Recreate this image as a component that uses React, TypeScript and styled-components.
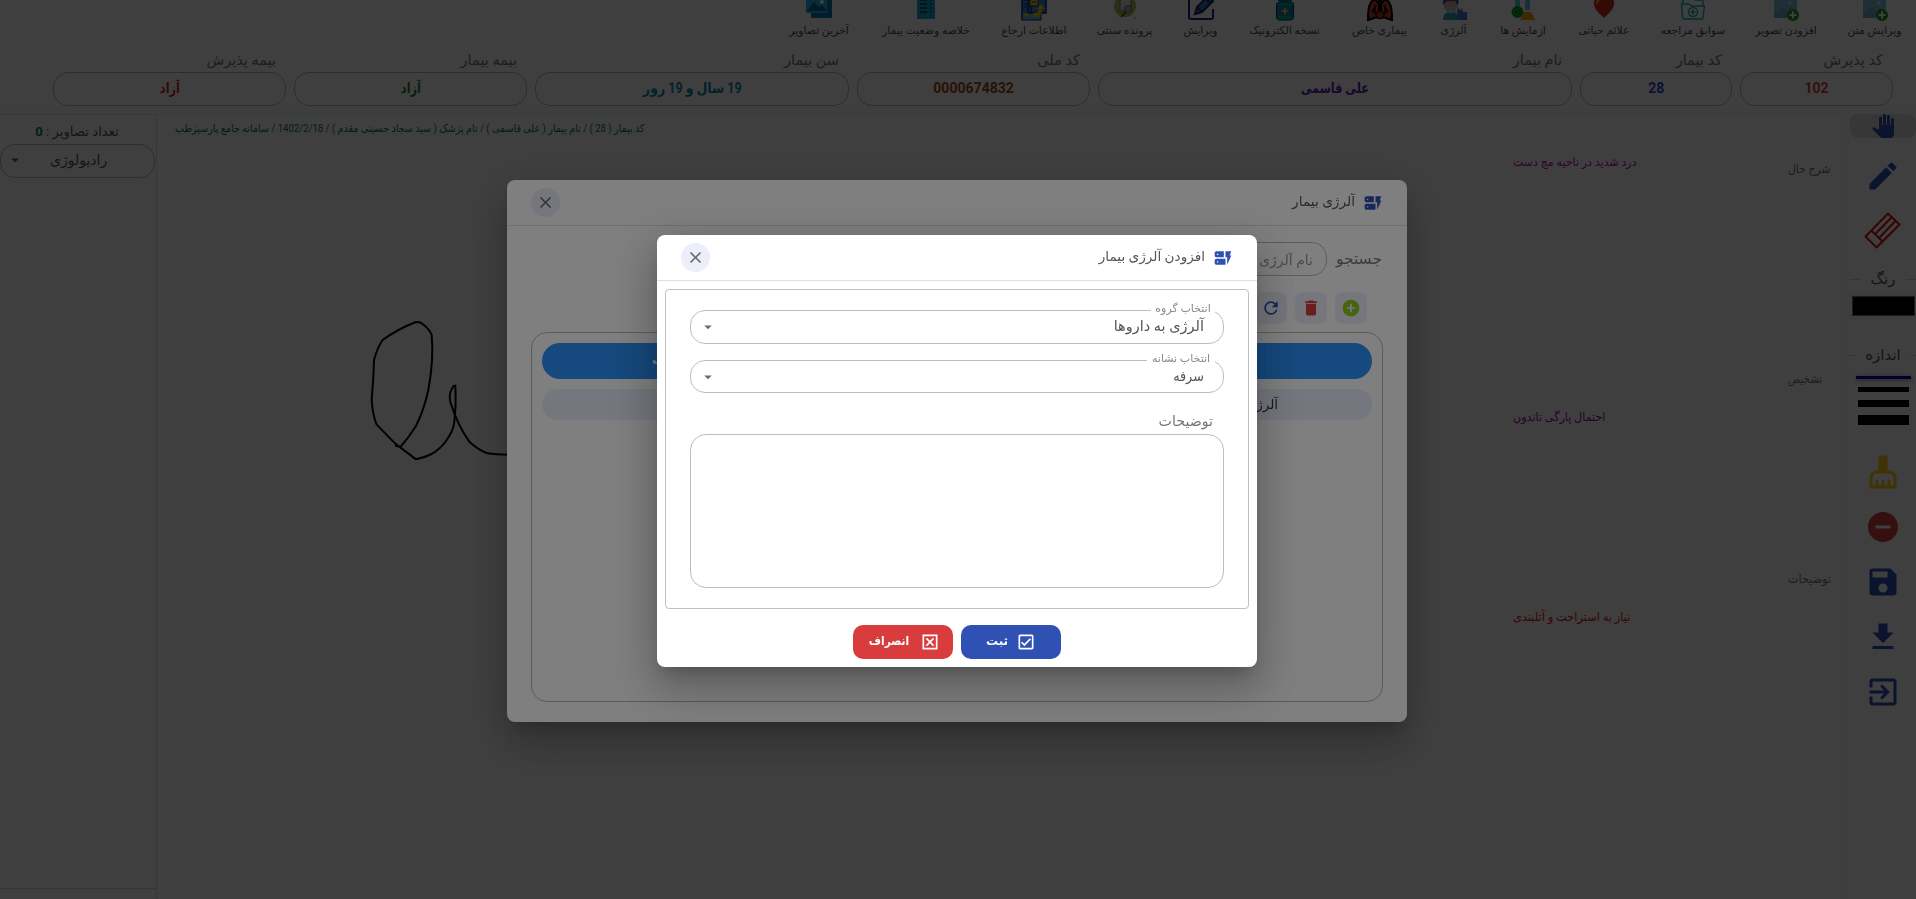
import React from "react";
import styled, { createGlobalStyle } from "styled-components";
import {
  MdPanTool, MdEdit, MdCleaningServices, MdRemoveCircle, MdSave, MdDownload, MdExitToApp,
  MdDynamicForm, MdClose, MdAddCircle, MdDelete, MdRefresh, MdArrowDropDown,
  MdOutlineCheckBox, MdOutlineDisabledByDefault,
} from "react-icons/md";

const Global = createGlobalStyle`
  *, *::before, *::after { box-sizing: border-box; }
  html, body { margin: 0; height: 100%; overflow: hidden; background: #fff; }
  body { font-family: Roboto, "DejaVu Sans", sans-serif; color: #555; }
  #root { height: 100%; }
`;

const Page = styled.div`
  direction: rtl;
  height: 899px;
  width: 1916px;
  display: flex;
  flex-direction: column;
  overflow: hidden;
  background: #fff;
`;

const Label = styled.span<{ $size?: number; $squeeze?: number; $color?: string; $bold?: boolean; $origin?: string }>`
  display: inline-block;
  white-space: nowrap;
  font-size: ${(p) => p.$size ?? 13}px;
  line-height: 20px;
  font-weight: ${(p) => (p.$bold ? 700 : 400)};
  color: ${(p) => p.$color ?? "inherit"};
  transform: scaleX(${(p) => p.$squeeze ?? 1});
  transform-origin: ${(p) => p.$origin ?? "center"};
`;

const TopBar = styled.div`
  height: 46px;
  padding-right: 15px;
  display: flex;
  gap: 32px;
`;
const TopItem = styled.div<{ $w: number }>`
  width: ${(p) => p.$w}px;
  flex: none;
  height: 41px;
  display: flex;
  flex-direction: column;
  align-items: center;
  justify-content: flex-end;
  color: #4a4a4a;
  svg { display: block; flex: none; width: 26px; height: 26px; }
`;

const PatientRow = styled.div`
  display: flex;
  gap: 8px;
  padding-right: 23px;
  height: 60px;
  flex: none;
`;
const PatientCell = styled.div<{ $w: number }>`
  width: ${(p) => p.$w}px;
  flex: none;
  display: flex;
  flex-direction: column;
`;
const CellTitle = styled.div`
  height: 26px;
  padding: 4px 10px 0 0;
  color: #757575;
`;
const CellBox = styled.div`
  height: 34px;
  border: 1px solid #b8b8b8;
  border-radius: 15px;
  display: flex;
  align-items: center;
  justify-content: center;
`;
const Strip = styled.div`
  height: 8px;
  flex: none;
  background: #f4f8fc;
`;
const Body = styled.div`
  flex: 1;
  display: flex;
  min-height: 0;
`;

const Tools = styled.div`
  width: 71px;
  flex: none;
  display: flex;
  flex-direction: column;
  align-items: center;
  border-left: 5px solid #f4f8fc;
  background: #fdfdff;
`;
const Tool = styled.div<{ $h?: number; $active?: boolean; $color?: string }>`
  width: 100%;
  height: ${(p) => p.$h ?? 55}px;
  flex: none;
  display: flex;
  align-items: center;
  justify-content: center;
  color: ${(p) => p.$color ?? "#3051b4"};
  background: ${(p) => (p.$active ? "#dcdcdc" : "transparent")};
  border-radius: 8px;
  > svg { margin-left: -1px; }
`;
const Divider = styled.div<{ $line: number }>`
  width: 100%;
  height: 20px;
  display: flex;
  align-items: center;
  justify-content: space-between;
  flex: none;
  &::before, &::after {
    content: "";
    width: ${(p) => p.$line}px;
    height: 1px;
    background: #d0d0d0;
  }
`;
const Swatch = styled.div`
  width: 100%;
  height: 28px;
  margin: 3px 0 25px;
  padding: 4px 1px 4px 2px;
  background: #f4f4f4;
  flex: none;
  &::before {
    content: "";
    display: block;
    height: 20px;
    background: #000;
    border: 1px solid #767676;
  }
`;
const Strokes = styled.div`
  display: flex;
  flex-direction: column;
  align-items: center;
  gap: 8px;
  padding-top: 11px;
  height: 79px;
  flex: none;
`;
const Stroke = styled.div<{ $h: number; $picked?: boolean }>`
  width: ${(p) => (p.$picked ? 55 : 51)}px;
  height: ${(p) => p.$h}px;
  background: ${(p) => (p.$picked ? "#0000a0" : "#000")};
  box-shadow: ${(p) => (p.$picked ? "0 1px 4px rgba(0, 0, 80, 0.5)" : "none")};
`;

const Sheet = styled.div`
  flex: 1;
  display: flex;
  min-width: 0;
  border-top: 1px solid #f0f0f0;
`;
const NoteTitles = styled.div`
  width: 57px;
  flex: none;
  display: flex;
  flex-direction: column;
  align-items: flex-end;
  color: #777;
`;
const Notes = styled.div`
  width: 275px;
  flex: none;
  display: flex;
  flex-direction: column;
  align-items: flex-end;
`;
const Gap = styled.div<{ $h: number }>`
  height: ${(p) => p.$h}px;
  flex: none;
`;
const Drawing = styled.div`
  flex: 1;
  display: flex;
  flex-direction: column;
  align-items: flex-end;
  padding: 4px 0 0 18px;
`;
const Signature = styled.svg`
  display: block;
  margin: 161px 0 0 165px;
  overflow: visible;
`;

const Gallery = styled.div`
  width: 157px;
  flex: none;
  border: 1px solid #d8dce0;
  border-width: 1px 1px 0 0;
  display: flex;
  flex-direction: column;
  justify-content: space-between;
  padding: 7px 0 10px 0;
`;
const GalleryTop = styled.div`
  display: flex;
  flex-direction: column;
  align-items: flex-end;
  b { color: #14823c; }
`;
const GalleryCount = styled.div`
  width: 154px;
  display: flex;
  justify-content: center;
`;
const GalleryLine = styled.div`
  height: 1px;
  background: #d0d0d0;
`;
const SmallSelect = styled.div`
  width: 155px;
  height: 34px;
  margin-top: 2px;
  border: 1px solid #b8b8b8;
  border-radius: 15px;
  display: flex;
  align-items: center;
  justify-content: flex-end;
  padding: 0 0 2px 5px;
  gap: 26px;
`;

const Backdrop = styled.div`
  position: fixed;
  inset: 0;
  direction: rtl;
  display: flex;
  align-items: center;
  justify-content: center;
  padding: 3px 2px 0 0;
  background: rgba(0, 0, 0, 0.5);
`;
const Dialog = styled.div<{ $w: number; $h: number }>`
  width: ${(p) => p.$w}px;
  height: ${(p) => p.$h}px;
  background: #fff;
  border-radius: 8px;
  display: flex;
  flex-direction: column;
  box-shadow: 0 11px 15px -7px rgba(0, 0, 0, 0.2), 0 24px 38px 3px rgba(0, 0, 0, 0.14), 0 9px 46px 8px rgba(0, 0, 0, 0.12);
`;
const DialogHead = styled.div`
  height: 46px;
  flex: none;
  display: flex;
  align-items: center;
  gap: 8px;
  padding: 0 24px;
  border-bottom: 1px solid #e0e0e0;
  > svg { color: #3051b4; flex: none; }
  > span { margin-top: -3px; }
`;
const CloseButton = styled.button`
  width: 29px;
  height: 29px;
  margin-right: auto;
  padding: 0;
  border: 0;
  border-radius: 50%;
  background: #eceff9;
  color: #666;
  display: flex;
  align-items: center;
  justify-content: center;
`;

const SearchRow = styled.div`
  display: flex;
  align-items: center;
  margin: 16px 25px 0 24px;
  gap: 9px;
  color: #777;
`;
const SearchLabel = styled.div`
  width: 46px;
`;
const SearchInput = styled.div`
  width: 260px;
  height: 34px;
  border: 1px solid #bbb;
  border-radius: 15px;
  padding: 7px 13px;
  color: #999;
`;
const Actions = styled.div`
  display: flex;
  gap: 8px;
  margin: 16px 40px 8px 0;
`;
const Action = styled.button<{ $color: string }>`
  width: 32px;
  height: 32px;
  padding: 0;
  border: 0;
  border-radius: 8px;
  background: #eceff9;
  color: ${(p) => p.$color};
  display: flex;
  align-items: center;
  justify-content: center;
`;
const Table = styled.div`
  flex: 1;
  margin: 0 24px 20px;
  border: 1px solid #b8b8b8;
  border-radius: 16px;
  padding: 10px;
  display: flex;
  flex-direction: column;
  gap: 10px;
`;
const TableRow = styled.div<{ $head?: boolean }>`
  height: ${(p) => (p.$head ? 36 : 31)}px;
  border-radius: 18px;
  background: ${(p) => (p.$head ? "#2c92fa" : "#ebeffc")};
  color: ${(p) => (p.$head ? "#fff" : "#333")};
  display: flex;
  justify-content: space-between;
  align-items: center;
  padding: 0 ${(p) => (p.$head ? 140 : 94)}px 2px 110px;
`;

const Panel = styled.div`
  height: 320px;
  margin: 8px 8px 0;
  border: 1px solid #c0c0c0;
  border-radius: 4px;
  padding: 20px 24px 0;
  display: flex;
  flex-direction: column;
`;
const Outlined = styled.fieldset<{ $h: number; $after: number }>`
  min-width: 0;
  height: ${(p) => p.$h + 9}px;
  margin: -9px 0 ${(p) => p.$after}px;
  border: 1px solid #bdbdbd;
  border-radius: 15px;
  padding: 0 19px 0 8px;
`;
const Legend = styled.legend<{ $w: number }>`
  width: ${(p) => p.$w}px;
  height: 18px;
  padding: 0;
  margin-right: -11px;
  display: flex;
  justify-content: center;
  color: #8a8a8a;
  span { line-height: 15px; }
`;
const Value = styled.div`
  display: flex;
  justify-content: space-between;
  align-items: center;
  margin-top: -3px;
  height: 22px;
  svg { color: #6c6c6c; }
`;
const AreaLabel = styled.div`
  padding: 1px 11px 0 0;
  height: 24px;
  color: #757575;
`;
const Area = styled.div`
  height: 154px;
  border: 1px solid #bdbdbd;
  border-radius: 16px;
`;
const Buttons = styled.div`
  display: flex;
  justify-content: center;
  gap: 8px;
  margin: 16px 0 0 0;
`;
const Button = styled.button<{ $bg: string }>`
  width: 100px;
  height: 34px;
  border: 0;
  padding: 0;
  border-radius: 10px;
  background: ${(p) => p.$bg};
  color: #fff;
  font-family: inherit;
  display: flex;
  align-items: center;
  justify-content: center;
  gap: 8px;
  span { margin-top: -3px; }
`;

const ImagePlus = () => (
  <svg viewBox="0 0 26 26">
    <rect x="1" y="1" width="23" height="22" rx="2" fill="#80b8d8" />
    <path d="M1 20l8-9 5 5 4-4 6 6v5H1z" fill="#70a4c8" />
    <circle cx="17" cy="8" r="2" fill="#b8d8e8" />
    <circle cx="20" cy="20" r="6" fill="#1f9a22" />
    <path d="M20 16.5v7M16.500 20h7" stroke="#fff" strokeWidth="2" />
  </svg>
);
const Folder = () => (
  <svg viewBox="0 0 26 26" fill="none" stroke="#20b0b0" strokeWidth="1.500">
    <path d="M3 8V1h10l2 4h6a2 2 0 0 1 2 2v4" />
    <path d="M1.500 9h8l2 2h13l-1.500 11a2 2 0 0 1-2 2H4.500a2 2 0 0 1-2-2z" />
    <circle cx="13" cy="17" r="4.500" />
    <path d="M13 14.500v5M10.500 17h5" />
  </svg>
);
const Heart = () => (
  <svg viewBox="0 0 26 26">
    <path d="M13 23C8 18 3 14 3 9a5.500 5.500 0 0 1 10-4 5.500 5.500 0 0 1 10 4c0 5-5 9-10 14z" fill="#d02818" />
    <path d="M6 9a3 3 0 0 1 3-4" stroke="#ff8a70" strokeWidth="2" fill="none" />
  </svg>
);
const Flasks = () => (
  <svg viewBox="0 0 26 26">
    <path d="M5 1h5v13H5zM15 1h5v14h-5z" fill="#50c8e0" />
    <circle cx="7.500" cy="17" r="6" fill="#08a028" />
    <circle cx="6" cy="17" r="1" fill="#005c14" />
    <circle cx="10" cy="19" r="1" fill="#005c14" />
    <path d="M14 17h7l4 8H10z" fill="#f89c08" />
  </svg>
);
const Patient = () => (
  <svg viewBox="0 0 26 26">
    <path d="M2 25c0-6 3-8 8-8s8 2 8 8z" fill="#30a0a8" />
    <circle cx="10" cy="10" r="7" fill="#e0a888" />
    <path d="M2 10C1 3 5 2 10 2s9 1 7 8l-3-4H6z" fill="#2850b8" />
    <path d="M5 12h10v4l-5 3-5-3z" fill="#a8c8e8" />
    <path d="M16 15l2-2 1 3 2-3 1 4h4v8h-9z" fill="#4870d0" />
  </svg>
);
const Lungs = () => (
  <svg viewBox="0 0 26 26">
    <path d="M12 3v6l-4-5C2 6 1 14 1 25l6-2 5-1zM14 3v6l4-5c6 2 7 10 7 21l-6-2-5-1z" fill="#c83c20" stroke="#000" strokeWidth="2" />
    <circle cx="13" cy="20" r="4" fill="#b82420" stroke="#000" />
    <path d="M13 0v13M9 10l-4 8M17 10l4 8M8 13v7M18 13v7" stroke="#000" strokeWidth="1.500" />
  </svg>
);
const Bottle = () => (
  <svg viewBox="0 0 26 26">
    <rect x="6" y="0" width="14" height="6" rx="2" fill="#00a890" stroke="#063060" />
    <rect x="4.500" y="7" width="17" height="18" rx="3" fill="#00a890" stroke="#063060" />
    <rect x="5" y="11" width="16" height="10" fill="#087cb0" />
    <path d="M13 12.500v7M9.500 16h7" stroke="#f8b840" strokeWidth="2" />
  </svg>
);
const EditSquare = () => (
  <svg viewBox="0 0 26 26" fill="none" stroke="#201c78" strokeWidth="2">
    <path d="M11 3H3a2 2 0 0 0-2 2v17a2 2 0 0 0 2 2h20a2 2 0 0 0 2-2v-8" />
    <path d="M7 19l2-7L20 1l5 5-11 11z" fill="#2878b8" />
    <path d="M9 12l5 5M18 4l4 4" />
  </svg>
);
const PaperFile = () => (
  <svg viewBox="0 0 26 26">
    <circle cx="13" cy="11" r="11" fill="#b8b850" />
    <path d="M8 1h8l3 4v11H8z" fill="#ddd" stroke="#777" />
    <circle cx="16" cy="14" r="3.500" fill="#90b8c4" stroke="#667" />
    <path d="M14 17l-5 5" stroke="#665520" strokeWidth="2" />
    <path d="M2 22h1M22 23h2M24 3h1" stroke="#cc4" strokeWidth="1.500" />
  </svg>
);
const Referral = () => (
  <svg viewBox="0 0 26 26">
    <path d="M1 5h9v19H1zM7 1h18v17H7z" fill="#3888d0" stroke="#083070" strokeWidth="1.500" />
    <path d="M7 18h13v7H1v-7" fill="#60b0e8" stroke="#083070" />
    <rect x="9" y="4" width="8" height="7" fill="#f8c810" stroke="#083070" />
    <path d="M11 7h4M3 9h3M3 12h3" stroke="#083070" />
    <path d="M12 22c7 1 9-3 9-8h3l-4-5-5 5h3c0 3-2 4-6 4z" fill="#f8c810" />
    <path d="M3 20h5" stroke="#f8c810" strokeWidth="2" />
  </svg>
);
const Summary = () => (
  <svg viewBox="0 0 26 26">
    <rect x="4" y="0" width="18" height="24" fill="#18a0c0" />
    <path d="M7 5h7M7 9h7M7 13h7M7 17h7M17 5h2M17 9h2M17 13h2M17 17h2" stroke="#063c68" strokeWidth="1.500" />
  </svg>
);
const Pictures = () => (
  <svg viewBox="0 0 26 26">
    <rect x="5" y="4" width="21" height="19" rx="1" fill="#0878b8" />
    <rect x="0" y="0" width="21" height="18" rx="1" fill="#28b0e0" />
    <path d="M1 16l7-9 5 5 3-2 5 6z" fill="#0868a0" />
    <circle cx="16" cy="7" r="2" fill="#fff" />
  </svg>
);
const Eraser = () => (
  <svg width="37" height="37" viewBox="0 0 37 37" fill="none" stroke="#d81010" strokeWidth="2" strokeLinejoin="round">
    <path d="M24 1.500L35.500 12.500 12.500 35.500 1.500 24.500zM7.200 18.500L18.500 29.500M11 22.200L27.700 5.300M15 26L31.500 9" />
  </svg>
);

const TOP: [string, number, React.FC][] = [
  ["ویرایش متن", 53, ImagePlus], ["افزودن تصویر", 60, ImagePlus], ["سوابق مراجعه", 62, Folder],
  ["علائم حیاتی", 52, Heart], ["ازمایش ها", 46, Flasks], ["آلرژی", 29, Patient],
  ["بیماری خاص", 55, Lungs], ["نسخه الکترونیک", 71, Bottle], ["ویرایش", 33, EditSquare],
  ["پرونده سنتی", 55, PaperFile], ["اطلاعات ارجاع", 62, Referral], ["خلاصه وضعیت بیمار", 90, Summary],
  ["آخرین تصاویر", 60, Pictures],
];

const PATIENT: [string, string, number, string, number][] = [
  ["کد پذیرش", "102", 153, "#e53935", 0.96], ["کد بیمار", "28", 152, "#3048c8", 0.96],
  ["نام بیمار", "علی قاسمی", 474, "#5a20b0", 0.78], ["کد ملی", "0000674832", 233, "#a04a10", 0.97],
  ["سن بیمار", "19 سال و 19 روز", 314, "#0888a8", 0.86], ["بیمه بیمار", "آزاد", 233, "#14823c", 0.78],
  ["بیمه پذیرش", "آزاد", 233, "#d81c28", 0.78],
];

const Select = ({ label, w, value, h, after, squeeze }: {
  label: string; w: number; value: string; h: number; after: number; squeeze?: number;
}) => (
  <Outlined $h={h} $after={after}>
    <Legend $w={w}><Label $size={11}>{label}</Label></Legend>
    <Value><Label $size={14.5} $squeeze={squeeze} $origin="right">{value}</Label><MdArrowDropDown size={18} /></Value>
  </Outlined>
);

export default function App() {
  return (
    <>
      <Global />
      <Page>
        <TopBar>
          {TOP.map(([t, w, Icon]) => (
            <TopItem key={t} $w={w}><Icon /><Label $size={10.8}>{t}</Label></TopItem>
          ))}
        </TopBar>
        <PatientRow>
          {PATIENT.map(([t, v, w, c, s]) => (
            <PatientCell key={t} $w={w}>
              <CellTitle><Label $size={14.5} $origin="right">{t}</Label></CellTitle>
              <CellBox><Label $size={14.5} $squeeze={s} $bold $color={c}>{v}</Label></CellBox>
            </PatientCell>
          ))}
        </PatientRow>
        <Strip />
        <Body>
          <Tools>
            <Tool $h={24} $active><MdPanTool size={24} /></Tool>
            <Gap $h={10} />
            <Tool><MdEdit size={36} /></Tool>
            <Tool><Eraser /></Tool>
            <Gap $h={11} />
            <Divider $line={10}><Label $size={15}>رنگ</Label></Divider>
            <Swatch />
            <Divider $line={6}><Label $size={15}>اندازه</Label></Divider>
            <Strokes>
              <Stroke $h={3} $picked /><Stroke $h={5} /><Stroke $h={7} /><Stroke $h={10} />
            </Strokes>
            <Tool $color="#ffc810"><MdCleaningServices size={36} /></Tool>
            <Tool $color="#d83c3c"><MdRemoveCircle size={36} /></Tool>
            <Tool><MdSave size={36} /></Tool>
            <Tool><MdDownload size={36} /></Tool>
            <Tool><MdExitToApp size={36} /></Tool>
          </Tools>
          <Sheet>
            <NoteTitles>
              <Gap $h={44} />
              <Label $size={12} $squeeze={0.9} $origin="left">شرح حال</Label>
              <Gap $h={190} />
              <Label $size={12} $squeeze={0.85} $origin="left">تشخیص</Label>
              <Gap $h={180} />
              <Label $size={12} $squeeze={0.93} $origin="left">توضیحات</Label>
            </NoteTitles>
            <Notes>
              <Gap $h={37} />
              <Label $size={12} $squeeze={0.92} $color="#c800c8" $origin="left">درد شدید در ناحیه مچ دست</Label>
              <Gap $h={235} />
              <Label $size={12} $squeeze={0.93} $color="#a000b0" $origin="left">احتمال پارگی تاندون</Label>
              <Gap $h={180} />
              <Label $size={12} $squeeze={0.95} $color="#d80c18" $origin="left">نیاز به استراحت و آتلبندی</Label>
            </Notes>
            <Drawing>
              <Label $size={11} $squeeze={0.87} $color="#0a7a34" $origin="left">
                کد بیمار ( 28 ) / نام بیمار ( علی قاسمی ) / نام پزشک ( سید سجاد حسینی مقدم ) / 1402/2/18 / سامانه جامع پارسیزطب
              </Label>
              <Signature width="220" height="180" viewBox="0 0 660 540" fill="none" stroke="#000" strokeWidth="6" strokeLinejoin="round">
                <path d="M165 437L182 440Q205 414 228 378Q252 330 265 270C276 210 280 160 275 105Q266 82 240 67L228 66Q175 86 128 120Q112 142 102 180L100 230L95 300Q98 345 110 374L165 430L228 478Q255 472 275 462Q305 444 320 420Q338 395 342 372Q349 320 346 257H342Q326 275 330 302Q352 375 388 425Q416 450 440 459Q465 464 510 464" />
              </Signature>
            </Drawing>
          </Sheet>
          <Gallery>
            <GalleryTop>
              <GalleryCount><Label $size={13.2}>تعداد تصاویر : <b>0</b></Label></GalleryCount>
              <SmallSelect><Label $size={14}>رادیولوژی</Label><MdArrowDropDown size={18} /></SmallSelect>
            </GalleryTop>
            <GalleryLine />
          </Gallery>
        </Body>
      </Page>

      <Backdrop>
        <Dialog $w={900} $h={542}>
          <DialogHead>
            <MdDynamicForm size={20} />
            <Label $size={13.7} $origin="right">آلرژی بیمار</Label>
            <CloseButton><MdClose size={19} /></CloseButton>
          </DialogHead>
          <SearchRow>
            <SearchLabel><Label $size={15.5} $origin="right">جستجو</Label></SearchLabel>
            <SearchInput><Label $size={14} $origin="right">نام آلرژی</Label></SearchInput>
          </SearchRow>
          <Actions>
            <Action $color="#8fc81c"><MdAddCircle size={20} /></Action>
            <Action $color="#d83c3c"><MdDelete size={20} /></Action>
            <Action $color="#3051b4"><MdRefresh size={20} /></Action>
          </Actions>
          <Table>
            <TableRow $head><Label $bold>نام گروه</Label><Label $bold>توضیحات</Label></TableRow>
            <TableRow><Label $size={13.5}>آلرژی به داروها</Label></TableRow>
          </Table>
        </Dialog>
      </Backdrop>

      <Backdrop>
        <Dialog $w={600} $h={432}>
          <DialogHead>
            <MdDynamicForm size={20} />
            <Label $size={13.6} $origin="right">افزودن آلرژی بیمار</Label>
            <CloseButton><MdClose size={19} /></CloseButton>
          </DialogHead>
          <Panel>
            <Select label="انتخاب گروه" w={64} value="آلرژی به داروها" h={34} after={16} />
            <Select label="انتخاب نشانه" w={68} value="سرفه" h={33} after={17} squeeze={0.88} />
            <AreaLabel><Label $size={14.2} $origin="right">توضیحات</Label></AreaLabel>
            <Area />
          </Panel>
          <Buttons>
            <Button $bg="#3051b4"><MdOutlineCheckBox size={20} /><Label $size={12} $bold>ثبت</Label></Button>
            <Button $bg="#d83c3c"><MdOutlineDisabledByDefault size={20} /><Label $size={12} $squeeze={0.88} $bold>انصراف</Label></Button>
          </Buttons>
        </Dialog>
      </Backdrop>
    </>
  );
}
